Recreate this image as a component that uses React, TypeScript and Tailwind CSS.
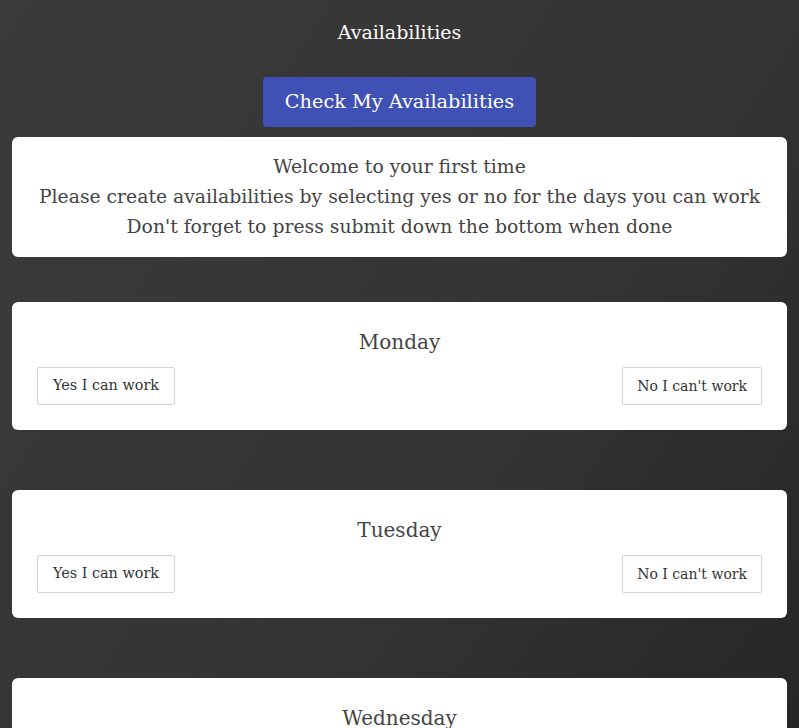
import React from 'react';

const days = ['Monday', 'Tuesday', 'Wednesday', 'Thursday', 'Friday'];

function DayCard({ day }: { day: string }) {
  return (
    <div className="bg-white rounded-md px-[25px] pt-[26px] pb-[25px] mb-[60px]">
      <h3 className="text-center text-[20px] leading-[28px] text-[#444]">{day}</h3>
      <div className="flex justify-between mt-[11px]">
        <button className="h-[38px] px-[15px] border border-[#d4d4d4] rounded-[2px] bg-white text-[14.4px] text-[#333]">
          Yes I can work
        </button>
        <button className="h-[38px] px-[14px] border border-[#d4d4d4] rounded-[2px] bg-white text-[14px] text-[#333]">
          No I can't work
        </button>
      </div>
    </div>
  );
}

export default function App() {
  return (
    <div
      className="min-h-screen bg-gradient-to-br from-[#3b3b3b] via-[#333333] to-[#1f1f1f] px-[12px]"
      style={{ fontFamily: '"DejaVu Serif", serif' }}
    >
      <h1 className="pt-[19px] text-center text-[19px] leading-[26px] text-white">Availabilities</h1>
      <div className="flex justify-center mt-[32px]">
        <button className="h-[50px] w-[273px] rounded bg-[#3f51b5] text-white text-[19.3px]">
          Check My Availabilities
        </button>
      </div>
      <div className="mt-[10px] bg-white rounded-md py-[15px] text-center text-[18.8px] leading-[30px] text-[#444]">
        <p>Welcome to your first time</p>
        <p>Please create availabilities by selecting yes or no for the days you can work</p>
        <p>Don't forget to press submit down the bottom when done</p>
      </div>
      <div className="mt-[45px]">
        {days.map((d) => (
          <DayCard key={d} day={d} />
        ))}
      </div>
    </div>
  );
}
